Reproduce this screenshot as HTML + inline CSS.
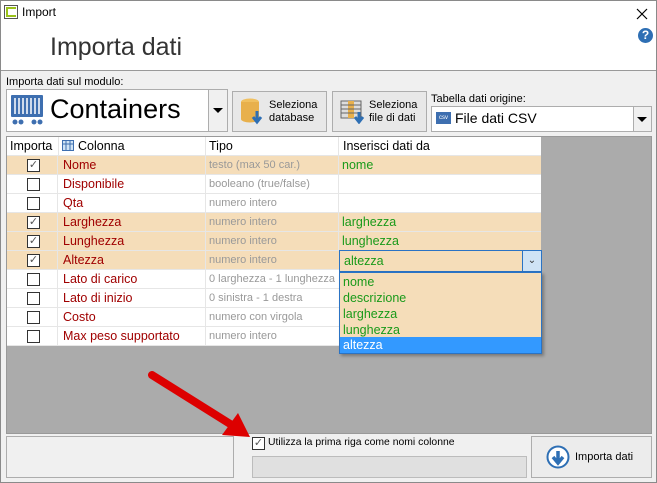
<!DOCTYPE html>
<html><head><meta charset="utf-8"><style>
*{box-sizing:border-box;margin:0;padding:0}
body{width:657px;height:483px;overflow:hidden;font-family:"Liberation Sans",sans-serif;font-size:12px;background:#f0f0f0;position:relative;color:#000}
.a{position:absolute}
.win{left:0;top:0;width:657px;height:483px;border:1px solid #8a8a8a}
.row{position:absolute;left:7px;width:534px;height:19px;border-bottom:1px solid #e6e6e6;background:#fff}
.row.h{background:#f5ddb9}
.row div{position:absolute;top:2px;white-space:nowrap}
.c1{left:0;width:51px;height:19px;border-right:1px solid #e6e6e6;top:0!important}
.cb{position:absolute;left:20px;top:3px!important;width:13px;height:13px;border:1px solid #333;background:#fff;font-size:11px;line-height:11px;text-align:center;color:#555}
.c2{left:56px;color:#a00000;font-size:12.5px}
.c3{left:202px;color:#999;font-size:11px;top:3px!important}
.c4{left:335px;color:#1a9a1a;font-size:12.5px}
.vl{position:absolute;top:0!important;height:19px;width:1px;background:#e6e6e6}
.btn{position:absolute;background:#e8e8e8;border:1px solid #adadad}
</style></head><body>
<div class="a" style="left:0;top:0;width:657px;height:71px;background:#fff;border-bottom:1px solid #999"></div>
<div class="a win"></div>
<div class="a" style="left:4px;top:5px;width:14px;height:14px;border:1px solid #555;background:#fff"><div class="a" style="left:1px;top:1px;width:10px;height:10px;border:2px solid #9ac21a;border-right:none"></div></div>
<div class="a" style="left:22px;top:5px;font-size:12px">Import</div>
<svg class="a" style="left:636px;top:8px" width="12" height="12"><path d="M1 1L11 11M11 1L1 11" stroke="#000" stroke-width="1.2"/></svg>
<div class="a" style="left:50px;top:33px;font-size:25px;color:#333">Importa dati</div>
<div class="a" style="left:638px;top:28px;width:15px;height:15px;border-radius:50%;background:#2e6fb4;color:#fff;font-size:12px;font-weight:bold;text-align:center;line-height:15px">?</div>

<div class="a" style="left:6px;top:76px;font-size:11px">Importa dati sul modulo:</div>
<div class="a" style="left:6px;top:89px;width:222px;height:43px;background:#fff;border:1px solid #adadad"></div>
<div class="a" style="left:208px;top:90px;width:19px;height:41px;background:#f0f0f0;border-left:1px solid #adadad"></div>
<div class="a" style="left:213px;top:108px;border-left:5px solid transparent;border-right:5px solid transparent;border-top:5px solid #000"></div>
<svg class="a" style="left:10px;top:94px" width="35" height="33"><g fill="#3e6fb0"><rect x="1" y="1" width="32" height="22" rx="1"/><circle cx="5" cy="28" r="2.5"/><circle cx="11" cy="28" r="2.5"/><circle cx="24" cy="28" r="2.5"/><circle cx="30" cy="28" r="2.5"/></g><g stroke="#fff" stroke-width="1.5"><path d="M5 4v16M9 4v16M13 4v16M17 4v16M21 4v16M25 4v16M29 4v16"/></g></svg>
<div class="a" style="left:50px;top:94px;font-size:27px">Containers</div>

<div class="btn" style="left:232px;top:91px;width:95px;height:41px"></div>
<svg class="a" style="left:240px;top:97px" width="26" height="30"><ellipse cx="10" cy="5" rx="9" ry="3.5" fill="#f0c060"/><rect x="1" y="5" width="18" height="17" fill="#e8b04c"/><ellipse cx="10" cy="22" rx="9" ry="3.5" fill="#e8b04c"/><path d="M17 14v10M13 20l4 5 4-5" stroke="#2e6fb4" stroke-width="3" fill="none"/></svg>
<div class="a" style="left:269px;top:99px;font-size:11px;line-height:13px">Seleziona<br>database</div>

<div class="btn" style="left:332px;top:91px;width:95px;height:41px"></div>
<svg class="a" style="left:340px;top:100px" width="26" height="24"><rect x="1" y="1" width="20" height="17" fill="#ddd" stroke="#666"/><rect x="8" y="1" width="6" height="17" fill="#e8b04c"/><path d="M1 5h20M1 9h20M1 13h20" stroke="#666"/><path d="M19 12v9M15 17l4 5 4-5" stroke="#2e6fb4" stroke-width="3" fill="none"/></svg>
<div class="a" style="left:369px;top:99px;font-size:11px;line-height:13px">Seleziona<br>file di dati</div>

<div class="a" style="left:431px;top:93px;font-size:11px">Tabella dati origine:</div>
<div class="a" style="left:431px;top:106px;width:221px;height:26px;background:#fff;border:1px solid #adadad"></div>
<div class="a" style="left:633px;top:107px;width:18px;height:24px;background:#f0f0f0;border-left:1px solid #adadad"></div>
<div class="a" style="left:637px;top:117px;border-left:5px solid transparent;border-right:5px solid transparent;border-top:5px solid #000"></div>
<div class="a" style="left:436px;top:112px;width:15px;height:12px;background:#3e6fb0;color:#fff;font-size:6px;line-height:12px;text-align:center">csv</div>
<div class="a" style="left:455px;top:110px;font-size:14px">File dati CSV</div>

<div class="a" style="left:6px;top:136px;width:646px;height:298px;background:#ababab;border:1px solid #999"></div>
<div class="a" style="left:7px;top:137px;width:534px;height:19px;background:#fff;border-bottom:1px solid #e6e6e6"></div>
<div class="a" style="left:10px;top:139px;font-size:12.5px">Importa</div>
<div class="a" style="left:58px;top:137px;width:1px;height:19px;background:#e6e6e6"></div>
<svg class="a" style="left:62px;top:140px" width="12" height="11"><rect x=".5" y=".5" width="11" height="10" fill="#cfe3f5" stroke="#3e6fb0"/><path d="M4 1v10M8 1v10M1 4h10" stroke="#3e6fb0"/></svg>
<div class="a" style="left:78px;top:139px;font-size:12.5px">Colonna</div>
<div class="a" style="left:205px;top:137px;width:1px;height:19px;background:#e6e6e6"></div>
<div class="a" style="left:209px;top:139px;font-size:12.5px">Tipo</div>
<div class="a" style="left:338px;top:137px;width:1px;height:19px;background:#e6e6e6"></div>
<div class="a" style="left:343px;top:139px;font-size:12.5px">Inserisci dati da</div>

<div class="row h" style="top:156px"><div class="c1"></div><div class="cb">&#10003;</div><div class="c2">Nome</div><div class="vl" style="left:198px"></div><div class="c3">testo (max 50 car.)</div><div class="vl" style="left:331px"></div><div class="c4">nome</div></div>
<div class="row" style="top:175px"><div class="c1"></div><div class="cb"></div><div class="c2">Disponibile</div><div class="vl" style="left:198px"></div><div class="c3">booleano (true/false)</div><div class="vl" style="left:331px"></div></div>
<div class="row" style="top:194px"><div class="c1"></div><div class="cb"></div><div class="c2">Qta</div><div class="vl" style="left:198px"></div><div class="c3">numero intero</div><div class="vl" style="left:331px"></div></div>
<div class="row h" style="top:213px"><div class="c1"></div><div class="cb">&#10003;</div><div class="c2">Larghezza</div><div class="vl" style="left:198px"></div><div class="c3">numero intero</div><div class="vl" style="left:331px"></div><div class="c4">larghezza</div></div>
<div class="row h" style="top:232px"><div class="c1"></div><div class="cb">&#10003;</div><div class="c2">Lunghezza</div><div class="vl" style="left:198px"></div><div class="c3">numero intero</div><div class="vl" style="left:331px"></div><div class="c4">lunghezza</div></div>
<div class="row h" style="top:251px"><div class="c1"></div><div class="cb">&#10003;</div><div class="c2">Altezza</div><div class="vl" style="left:198px"></div><div class="c3">numero intero</div></div>
<div class="row" style="top:270px"><div class="c1"></div><div class="cb"></div><div class="c2">Lato di carico</div><div class="vl" style="left:198px"></div><div class="c3">0 larghezza - 1 lunghezza</div></div>
<div class="row" style="top:289px"><div class="c1"></div><div class="cb"></div><div class="c2">Lato di inizio</div><div class="vl" style="left:198px"></div><div class="c3">0 sinistra - 1 destra</div></div>
<div class="row" style="top:308px"><div class="c1"></div><div class="cb"></div><div class="c2">Costo</div><div class="vl" style="left:198px"></div><div class="c3">numero con virgola</div></div>
<div class="row" style="top:327px"><div class="c1"></div><div class="cb"></div><div class="c2">Max peso supportato</div><div class="vl" style="left:198px"></div><div class="c3">numero intero</div></div>

<div class="a" style="left:339px;top:250px;width:203px;height:22px;border:1px solid #2a73c4;background:#f5ddb9"></div>
<div class="a" style="left:522px;top:251px;width:19px;height:20px;background:#cfe3f5;border-left:1px solid #2a73c4;text-align:center;font-size:10px;line-height:20px;color:#333">&#8964;</div>
<div class="a" style="left:344px;top:254px;color:#1a9a1a;font-size:12.5px">altezza</div>
<div class="a" style="left:339px;top:272px;width:203px;height:82px;border:1px solid #2a73c4;background:#f5ddb9;box-shadow:2px 2px 3px rgba(0,0,0,.3)"></div>
<div class="a" style="left:343px;top:274px;color:#1a9a1a;font-size:12.5px;line-height:16px">nome<br>descrizione<br>larghezza<br>lunghezza</div>
<div class="a" style="left:340px;top:337px;width:201px;height:16px;background:#3399ff;color:#fff;font-size:12.5px;padding-left:3px;line-height:16px">altezza</div>

<svg class="a" style="left:140px;top:365px" width="120" height="80"><path d="M12 10 L95 62" stroke="#d00" stroke-width="8" stroke-linecap="round"/><path d="M110 72 L82 70 L98 48 Z" fill="#d00"/></svg>

<div class="a" style="left:6px;top:436px;width:228px;height:42px;border:1px solid #adadad"></div>
<div class="a" style="left:252px;top:437px;width:13px;height:13px;border:1px solid #333;background:#fff;font-size:11px;line-height:11px;text-align:center;color:#555">&#10003;</div>
<div class="a" style="left:268px;top:437px;font-size:10.4px">Utilizza la prima riga come nomi colonne</div>
<div class="a" style="left:252px;top:456px;width:275px;height:22px;background:#e0e0e0;border:1px solid #bcbcbc"></div>
<div class="btn" style="left:531px;top:436px;width:121px;height:42px;background:#ececec"></div>
<svg class="a" style="left:546px;top:445px" width="24" height="24"><circle cx="12" cy="12" r="10.5" fill="#fff" stroke="#2e6fb4" stroke-width="2"/><path d="M12 6v11M7 12l5 6 5-6" stroke="#2e6fb4" stroke-width="3.5" fill="none"/></svg>
<div class="a" style="left:575px;top:451px;font-size:11px">Importa dati</div>
</body></html>
